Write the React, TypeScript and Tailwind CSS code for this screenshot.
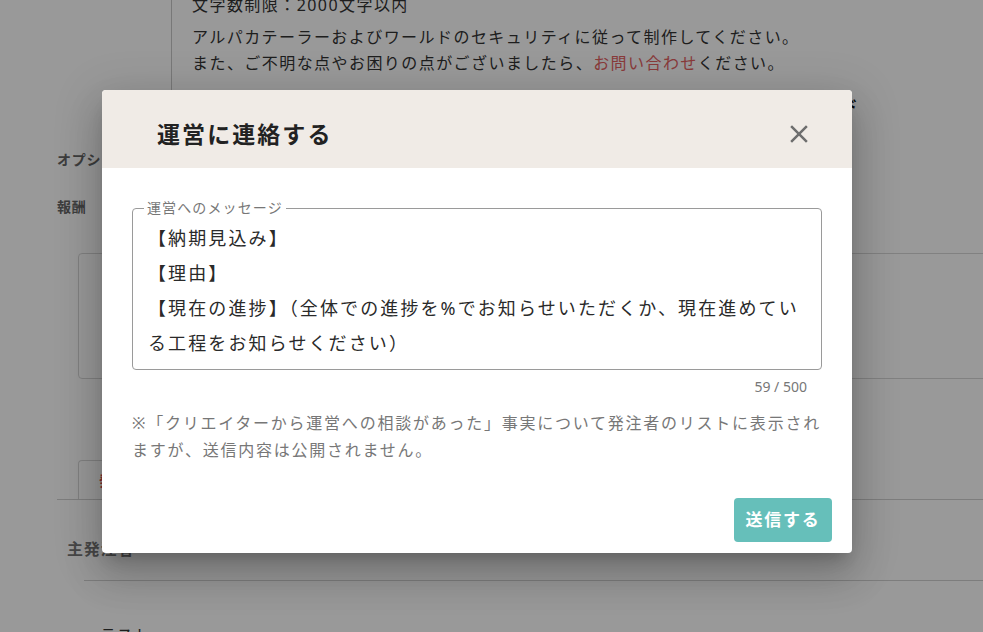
const font = "font-['Noto_Sans','Noto_Sans_CJK_JP',sans-serif]";

function CloseIcon() {
  return (
    <svg width="30" height="30" viewBox="0 0 24 24" fill="currentColor">
      <path d="M19 6.41 17.59 5 12 10.59 6.41 5 5 6.41 10.59 12 5 17.59 6.41 19 12 13.41 17.59 19 19 17.59 13.41 12z" />
    </svg>
  );
}

function PageBehind() {
  return (
    <div className="text-[#333]">
      {/* description block */}
      <div className="-mt-[8px] pl-[171px]">
        <div className="w-[700px] border-l border-[#c8c8c8] pb-[24px] pl-[20px] text-[16px] leading-[26px] tracking-[0.09em]">
          <div>文字数制限：2000文字以内</div>
          <div className="mt-[6px]">
            アルパカテーラーおよびワールドのセキュリティに従って制作してください。
          </div>
          <div>
            また、ご不明な点やお困りの点がございましたら、
            <span className="text-[#e46262]">お問い合わせ</span>
            ください。
          </div>
          <div className="mr-[12px] mt-[17px] text-right font-bold text-[#111]">
            参考資料はこちらからダウンロード
          </div>
        </div>
      </div>

      {/* form rows */}
      <div className="ml-[57px] text-[14px] font-bold leading-[20px] tracking-[0.05em] text-[#666]">
        <div className="mt-[7px]">オプション</div>
        <div className="mt-[27px]">報酬</div>
      </div>
      <div className="ml-[78px] mt-[36px] h-[126px] w-[1000px] rounded-[4px] border border-[#d8d8d8]" />

      {/* tabs */}
      <div className="ml-[57px] mt-[81px] border-b border-[#d0d0d0]">
        <div className="ml-[21px] flex h-[39px] w-[160px] items-center rounded-t-[4px] border border-b-0 border-[#d8d8d8] pl-[20px] text-[14px] font-bold text-[#e04848]">
          発注者
        </div>
      </div>
      <div className="ml-[67px] mt-[37px] text-[16px] font-bold leading-[24px] tracking-[0.05em] text-[#777]">
        主発注者
      </div>
      <div className="ml-[84px] mt-[19px] border-t border-[#d0d0d0]" />
      <div className="ml-[100px] mt-[42px] text-[16px] leading-[24px] tracking-[0.05em]">
        テスト
      </div>
    </div>
  );
}

function ContactDialog() {
  return (
    <div className="absolute left-[102px] top-[90px] w-[750px] overflow-hidden rounded-[4px] bg-white shadow-[0_11px_15px_-7px_rgba(0,0,0,0.2),0_24px_38px_3px_rgba(0,0,0,0.14),0_9px_46px_8px_rgba(0,0,0,0.12)]">
      <div className="flex h-[78px] items-center justify-between bg-[#f0ebe6] pl-[55px] pr-[38px] pt-[10px]">
        <h2 className="text-[23px] font-bold tracking-[0.09em] text-[#222]">運営に連絡する</h2>
        <button className="flex h-[30px] w-[30px] items-center justify-center text-[#6f6f6f]">
          <CloseIcon />
        </button>
      </div>

      <div className="px-[30px] pb-[24px] pt-[32px]">
        <fieldset className="rounded-[4px] border border-[#9a9a9a] pb-[8px] pl-[15px] pr-[10px] pt-[5px]">
          <legend className="-ml-[4px] px-[3px] text-[14px] leading-[16px] tracking-[0.08em] text-[#777]">
            運営へのメッセージ
          </legend>
          <div className="whitespace-pre-wrap text-[18px] leading-[35px] tracking-[0.117em] text-[#2a2a2a]">
            {"【納期見込み】\n【理由】\n【現在の進捗】（全体での進捗を%でお知らせいただくか、現在進めている工程をお知らせください）"}
          </div>
        </fieldset>
        <div className="mr-[15px] mt-[7px] text-right text-[14px] leading-[20px] text-[#777]">59 / 500</div>
        <p className="mt-[13px] text-[16px] leading-[27px] tracking-[0.11em] text-[#777]">
          ※「クリエイターから運営への相談があった」事実について発注者のリストに表示されますが、送信内容は公開されません。
        </p>
      </div>

      <div className="flex justify-end px-[20px] pb-[11px] pt-[10px]">
        <button className="h-[44px] w-[98px] rounded-[4px] bg-[#66bfba] text-[17px] font-bold tracking-[0.1em] text-white">
          送信する
        </button>
      </div>
    </div>
  );
}

export default function App() {
  return (
    <div className={`relative h-[632px] w-[983px] overflow-hidden bg-white ${font}`}>
      <PageBehind />
      <div className="absolute inset-0 bg-black/40" />
      <ContactDialog />
    </div>
  );
}
